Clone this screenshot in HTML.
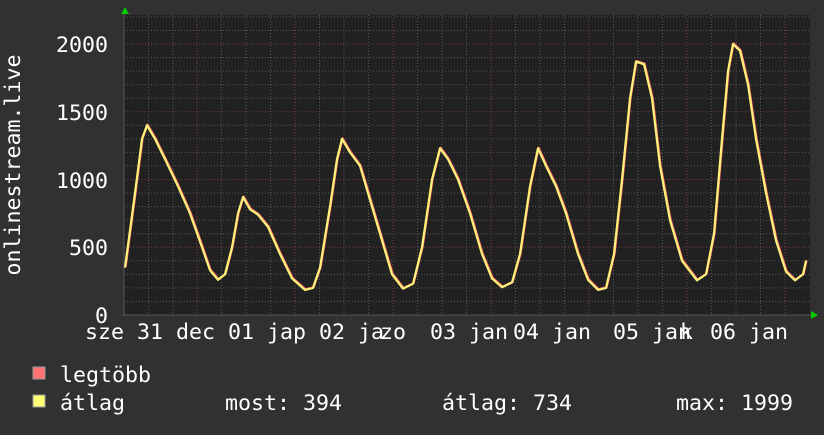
<!DOCTYPE html>
<html><head><meta charset="utf-8"><style>
body{margin:0;width:824px;height:430px;background:#313131;overflow:hidden}
svg text{font-family:"DejaVu Sans Mono","Liberation Mono",monospace;font-size:21.6px;fill:#fff}
</style></head><body>
<svg width="824" height="430" xmlns="http://www.w3.org/2000/svg">
<rect x="124" y="15" width="686" height="300" fill="#212121"/>
<path stroke="#585858" stroke-width="1" stroke-dasharray="1,2" fill="none" d="M124 301.5H810M124 287.9H810M124 274.4H810M124 260.8H810M124 233.7H810M124 220.2H810M124 206.6H810M124 193.1H810M124 165.9H810M124 152.4H810M124 138.9H810M124 125.3H810M124 98.2H810M124 84.7H810M124 71.1H810M124 57.6H810M124 30.5H810M124 16.9H810
M148.5 15V318M173 15V318M221.5 15V318M246 15V318M270.5 15V318M319.5 15V318M344 15V318M368.5 15V318M417.5 15V318M442 15V318M466.5 15V318M515.5 15V318M540 15V318M564.5 15V318M613.5 15V318M638 15V318M662.5 15V318M711.5 15V318M736 15V318M760.5 15V318"/>
<path stroke="#7a3a3a" stroke-width="1" stroke-dasharray="1,2" fill="none" d="M124 247.3H810M124 179.5H810M124 111.8H810M124 44H810M197 15V318M295 15V318M393 15V318M491 15V318M589 15V318M687 15V318M785 15V318"/>
<line x1="124" y1="12" x2="124" y2="316" stroke="#555"/>
<line x1="122" y1="315" x2="812" y2="315" stroke="#555"/>
<polygon points="121,14 125,7 129,14" fill="#0c0"/>
<polygon points="811,311 818,315 811,319" fill="#0c0"/>
<g fill="none" stroke-linejoin="round" stroke-width="2.2">
<polyline stroke="#ff6a6a" transform="translate(0.6,-0.6)" points="125,267.6 135,193 142,138.9 147,125.3 155,138.9 165,159.2 178,186.3 190,213.4 202,247.3 210,270.3 218,279.8 225,274.3 232,247.3 238,213.4 243,197.1 250,209.3 258,214.7 268,226.9 280,254 292,278.4 305,289.9 313,287.9 320,267.6 330,206.6 337,159.2 342,138.9 350,152.4 360,165.9 370,199.8 380,233.7 392,274.3 403,288.6 413,283.8 422,247.3 432,179.5 440,148.3 448,159.2 458,179.5 470,213.4 482,254 492,278.4 502,287.2 512,282.5 520,254 530,186.3 538,148.3 546,165.9 556,186.3 566,213.4 578,254 588,279.8 598,289.9 606,287.9 614,254 622,179.5 630,98.2 636,61.6 644,64.3 652,98.2 660,165.9 670,220.2 682,260.8 697,280.4 706,274.3 714,233.7 722,138.9 728,71.1 733,44 740,50.8 748,84.6 756,138.9 766,193 776,240.5 786,271.6 795,280.4 803,274.3 806,260.8"/>
<polyline stroke="#fff27a" points="125,267.6 135,193 142,138.9 147,125.3 155,138.9 165,159.2 178,186.3 190,213.4 202,247.3 210,270.3 218,279.8 225,274.3 232,247.3 238,213.4 243,197.1 250,209.3 258,214.7 268,226.9 280,254 292,278.4 305,289.9 313,287.9 320,267.6 330,206.6 337,159.2 342,138.9 350,152.4 360,165.9 370,199.8 380,233.7 392,274.3 403,288.6 413,283.8 422,247.3 432,179.5 440,148.3 448,159.2 458,179.5 470,213.4 482,254 492,278.4 502,287.2 512,282.5 520,254 530,186.3 538,148.3 546,165.9 556,186.3 566,213.4 578,254 588,279.8 598,289.9 606,287.9 614,254 622,179.5 630,98.2 636,61.6 644,64.3 652,98.2 660,165.9 670,220.2 682,260.8 697,280.4 706,274.3 714,233.7 722,138.9 728,71.1 733,44 740,50.8 748,84.6 756,138.9 766,193 776,240.5 786,271.6 795,280.4 803,274.3 806,260.8"/>
</g>
<g text-anchor="end">
<text x="108" y="52">2000</text><text x="108" y="120">1500</text><text x="108" y="188">1000</text>
<text x="108" y="255">500</text><text x="108" y="323">0</text>
</g>
<text transform="translate(20,165) rotate(-90)" text-anchor="middle">onlinestream.live</text>
<text x="85" y="339">sze 31</text>
<text x="176" y="339">dec</text>
<text x="228" y="339">01 jap</text>
<text x="319" y="339">02 ja</text>
<text x="380" y="339">zo</text>
<text x="430" y="339">03 jan</text>
<text x="513" y="339">04 jan</text>
<text x="613" y="339">05 jan</text>
<text x="680" y="339">k</text>
<text x="710" y="339">06 jan</text>
<rect x="33" y="367" width="12" height="12" fill="#ff7373" stroke="#999"/>
<rect x="33" y="395" width="12" height="12" fill="#ffff73" stroke="#999"/>
<text x="60" y="382">legtöbb</text>
<text x="60" y="410">átlag</text>
<text x="225" y="410">most: 394</text>
<text x="442" y="410">átlag: 734</text>
<text x="676" y="410">max: 1999</text>
</svg>
</body></html>
